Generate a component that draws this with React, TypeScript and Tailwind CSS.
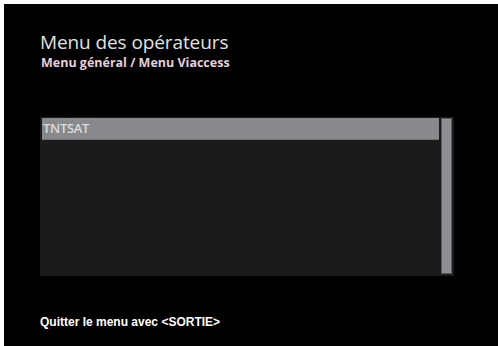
export default function App() {
  return (
    <div className="w-[498px] h-[346px] bg-white pl-[4px] pt-[4px] overflow-hidden">
      <div className="w-full h-full bg-black flex flex-col pl-[36px]">
        {/* header */}
        <h1 className="mt-[27px] text-[19px] leading-[22px] text-[#e2e2e2] font-['Open_Sans',sans-serif] tracking-[-0.1px]">
          Menu des opérateurs
        </h1>
        <p className="mt-[2px] text-[12.5px] leading-[15px] font-bold text-[#e6cfd9] font-['Open_Sans',sans-serif] pl-[1px]">
          Menu général / Menu Viaccess
        </p>

        {/* list */}
        <div className="mt-[47px] w-[414px] h-[159px] bg-[#1b1b1b] flex pt-[1px] pl-[2px] pr-[2px] pb-[2px] gap-[2px]">
          <div className="flex-1">
            <div className="h-[22px] bg-[#88898c] border-b border-[#6e6f72] flex items-center pl-[1px]">
              <span className="text-[13px] font-semibold text-[#dadada] font-['Open_Sans',sans-serif] tracking-[-0.3px]">
                TNTSAT
              </span>
            </div>
          </div>
          <div className="w-[11px] h-[156px] bg-[#8d8f93] border border-[#5a5b5e]" />
        </div>

        {/* footer */}
        <p className="mt-[39px] text-[12px] leading-[14px] font-bold text-white font-['Liberation_Sans',Arial,sans-serif]">
          Quitter le menu avec &lt;SORTIE&gt;
        </p>
      </div>
    </div>
  );
}
